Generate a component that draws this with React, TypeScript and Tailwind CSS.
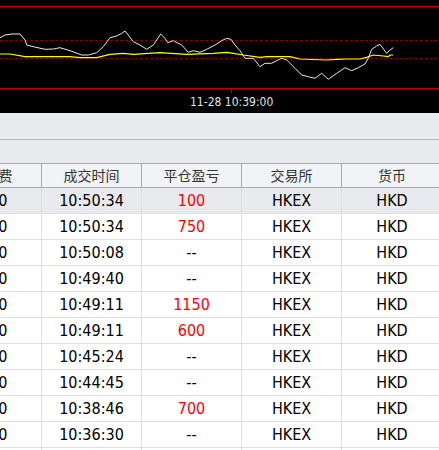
const white: [number, number][] = [
  [0, 37.7], [5, 35], [11.7, 34], [20, 34], [25, 40], [26.7, 45], [33.3, 46.7], [45, 49.3],
  [53.3, 49], [60, 47.7], [70, 50.7], [81.7, 55], [88.3, 55], [96.7, 52.7], [103.3, 46.7],
  [110, 37.7], [116.7, 36], [121.7, 33.3], [125, 31], [128.3, 35], [133.3, 41.7], [140, 45],
  [146.7, 49.3], [153.3, 45], [156.7, 40], [160.7, 34], [165, 38.3], [167.7, 42.7], [173.3, 40.7],
  [181.7, 45], [188.3, 52.3], [193.3, 50.7], [200, 52.3], [206.7, 49.3], [215, 45], [221.7, 40.7],
  [226.7, 38.3], [231, 39.3], [235, 45], [240, 50.7], [245, 58.3], [253.3, 58.3], [260, 66.7],
  [265, 63.3], [271.7, 63.3], [276.7, 60.7], [281.7, 58.3], [286.7, 60], [295, 68.3], [301.7, 75],
  [308.3, 76.7], [315, 78.3], [321.7, 73.3], [328.3, 79.3], [336.7, 73.3], [345, 67.7],
  [351.7, 70.7], [358.3, 67.7], [365, 64], [368.3, 58.3], [371.7, 49.3], [376.7, 46], [380, 44.3],
  [386.7, 53.3], [390, 50], [393.3, 47.7],
];

const yellow: [number, number][] = [
  [0, 54], [10, 54], [25, 56.7], [70, 56.7], [80, 57.7], [96.7, 57.7], [110, 54.3], [123.3, 53.3],
  [133.3, 54.3], [160, 52.7], [186.7, 54.3], [213.3, 53.3], [226.7, 52.3], [233.3, 53.3], [243.3, 55],
  [260, 57.3], [266.7, 56.7], [290, 56.7], [300, 59], [326.7, 60], [336.7, 59.3], [346.7, 59],
  [360, 59], [366.7, 57.3], [373.3, 55], [383.3, 56], [388.3, 56.7], [390, 55], [393.3, 55],
];

const pts = (a: [number, number][]) => a.map(([x, y]) => `${x},${y}`).join(" ");

const rows = [
  { time: "10:50:34", pnl: "100" },
  { time: "10:50:34", pnl: "750" },
  { time: "10:50:08", pnl: "--" },
  { time: "10:49:40", pnl: "--" },
  { time: "10:49:11", pnl: "1150" },
  { time: "10:49:11", pnl: "600" },
  { time: "10:45:24", pnl: "--" },
  { time: "10:44:45", pnl: "--" },
  { time: "10:38:46", pnl: "700" },
  { time: "10:36:30", pnl: "--" },
  { time: "10:35:02", pnl: "--" },
];

const font = { fontFamily: '"DejaVu Sans Condensed", "DejaVu Sans", "Noto Sans CJK SC", sans-serif' };
const cjk = { fontFamily: '"Noto Sans CJK SC", sans-serif' };

function Chart() {
  return (
    <div className="bg-black h-[113px]">
      <svg width="439" height="93" className="block">
        <line x1="0" y1="6.5" x2="439" y2="6.5" stroke="#c00000" strokeWidth="1" />
        <line x1="0" y1="40.5" x2="439" y2="40.5" stroke="#8a0000" strokeWidth="1" strokeDasharray="3 2" />
        <line x1="0" y1="58.5" x2="439" y2="58.5" stroke="#8a0000" strokeWidth="1" strokeDasharray="3 2" />
        <polyline points={pts(yellow)} fill="none" stroke="#ffff00" strokeWidth="1.2" />
        <polyline points={pts(white)} fill="none" stroke="#e8e8e8" strokeWidth="1" />
        <line x1="0" y1="88.5" x2="439" y2="88.5" stroke="#c00000" strokeWidth="1" />
        <line x1="231.5" y1="88" x2="231.5" y2="93" stroke="#c00000" strokeWidth="1" />
      </svg>
      <div className="pl-[190px] h-[20px] leading-[18px] text-[12px] text-[#dfe6ee]" style={font}>
        11-28 10:39:00
      </div>
    </div>
  );
}

export default function App() {
  return (
    <div className="w-[439px] h-[450px] overflow-hidden bg-white">
      <Chart />

      {/* toolbar bands */}
      <div className="h-[27px] bg-[#e8eaee] border-b border-[#b3b7be]" />
      <div className="h-[23px] bg-[#e8eaee]" />

      {/* header */}
      <div className="flex h-[25px] bg-[#f1f3f6] border-y border-[#a6aab2] text-[14px] text-[#333]" style={cjk}>
        <div className="w-[100px] shrink-0 ml-[-58px] border-r border-[#a6aab2] flex items-center justify-center">手续费</div>
        <div className="w-[100px] shrink-0 border-r border-[#a6aab2] flex items-center justify-center">成交时间</div>
        <div className="w-[100px] shrink-0 border-r border-[#a6aab2] flex items-center justify-center">平仓盈亏</div>
        <div className="w-[100px] shrink-0 border-r border-[#a6aab2] flex items-center justify-center">交易所</div>
        <div className="w-[100px] shrink-0 flex items-center justify-center">货币</div>
      </div>

      {/* rows */}
      {rows.map((r, i) => (
        <div
          key={i}
          className={`flex h-[26px] border-b border-[#dcdfe4] text-[16px] text-black ${i === 0 ? "bg-[#e9eaed]" : "bg-white"}`}
          style={font}
        >
          <div className="w-[100px] shrink-0 ml-[-58px] border-r border-[#dcdfe4] flex items-center justify-center">0.00</div>
          <div className="w-[100px] shrink-0 border-r border-[#dcdfe4] flex items-center justify-center">{r.time}</div>
          <div className={`w-[100px] shrink-0 border-r border-[#dcdfe4] flex items-center justify-center ${r.pnl === "--" ? "text-black" : "text-[#ff0000]"}`}>
            {r.pnl}
          </div>
          <div className="w-[100px] shrink-0 border-r border-[#dcdfe4] flex items-center justify-center">HKEX</div>
          <div className="w-[100px] shrink-0 flex items-center justify-center">HKD</div>
        </div>
      ))}
    </div>
  );
}
